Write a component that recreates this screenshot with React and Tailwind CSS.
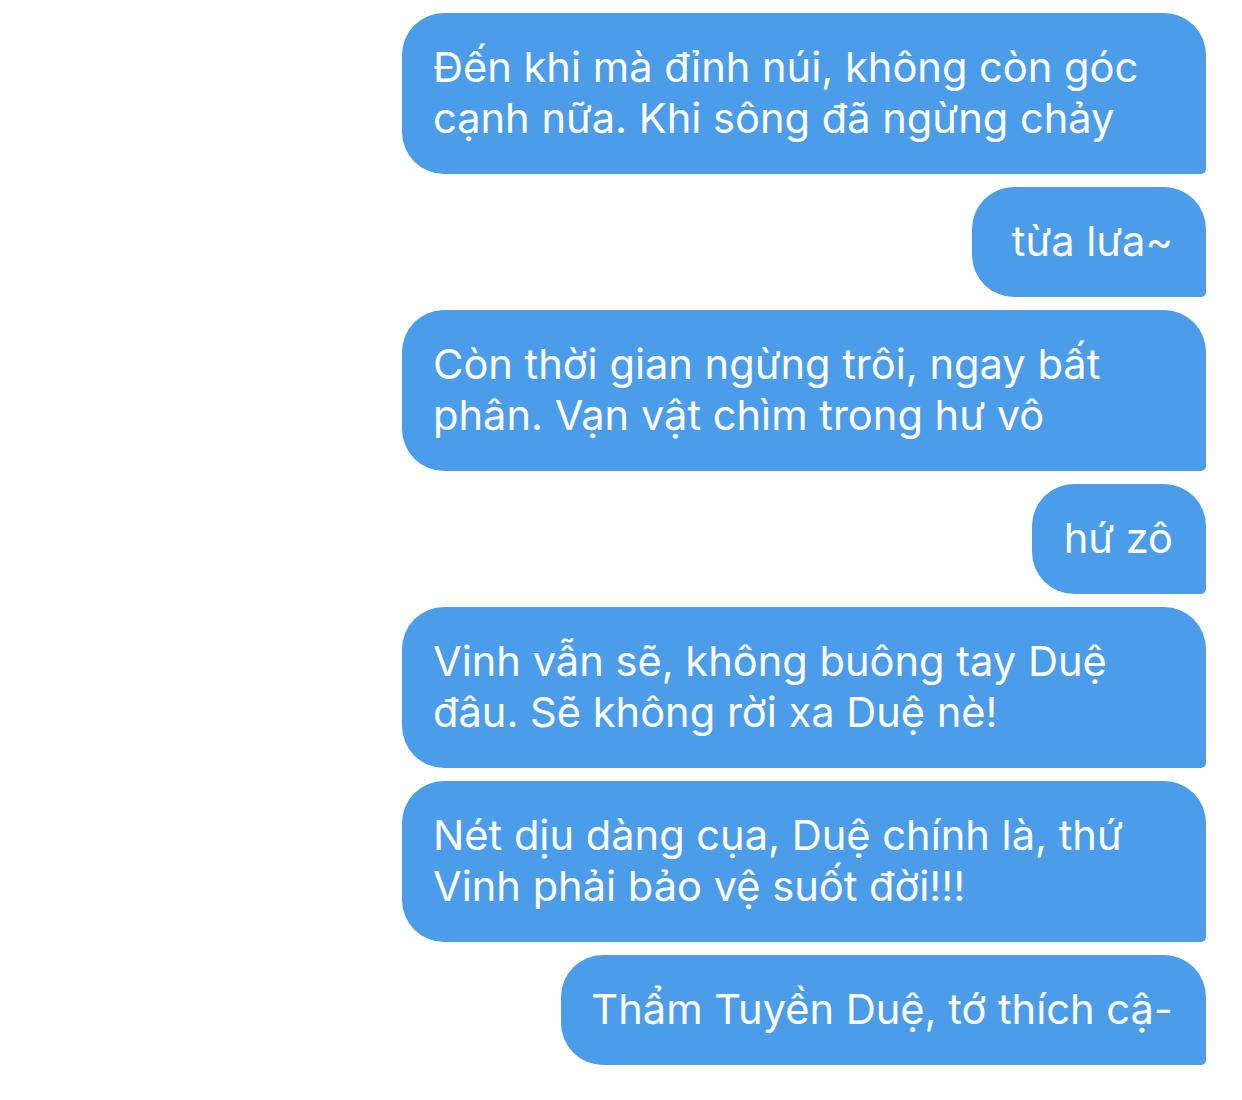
import React from "react";

const font = { fontFamily: "Inter, 'Noto Sans', sans-serif" };

function Bubble({ lines, wide, extraClass = "" }) {
  return (
    <div
      className={
        "bg-[#4c9de9] text-white rounded-[42px] rounded-br-[5px] pt-[29px] pb-[30px] text-[41.6px] leading-[51px] whitespace-nowrap " +
        (wide ? "w-[804px] pl-[31px] pr-[33px] " : "pr-[33px] ") +
        extraClass
      }
    >
      {lines.map((l, i) => (
        <div key={i}>{l}</div>
      ))}
    </div>
  );
}

export default function App() {
  return (
    <div className="w-[1242px] h-[1100px] bg-white" style={font}>
      <div className="flex flex-col items-end gap-[13px] pt-[13px] pr-[36px]">
        <Bubble wide lines={["Đến khi mà đỉnh núi, không còn góc", "cạnh nữa. Khi sông đã ngừng chảy"]} />
        <Bubble lines={["từa lưa~"]} extraClass="pl-[40px]" />
        <Bubble wide lines={["Còn thời gian ngừng trôi, ngay bất", "phân. Vạn vật chìm trong hư vô"]} />
        <Bubble lines={["hứ zô"]} extraClass="pl-[32px]" />
        <Bubble wide lines={["Vinh vẫn sẽ, không buông tay Duệ", "đâu. Sẽ không rời xa Duệ nè!"]} />
        <Bubble wide lines={["Nét dịu dàng cụa, Duệ chính là, thứ", "Vinh phải bảo vệ suốt đời!!!"]} />
        <Bubble lines={["Thẩm Tuyền Duệ, tớ thích cậ-"]} extraClass="pl-[30px]" />
      </div>
    </div>
  );
}
